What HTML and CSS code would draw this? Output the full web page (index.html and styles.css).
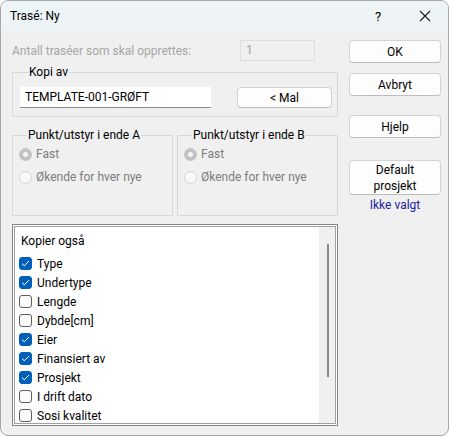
FILE: index.html
```html
<!DOCTYPE html>
<html lang="no">
<head>
<meta charset="utf-8">
<title>Trasé: Ny</title>
<link rel="stylesheet" href="styles.css">
</head>
<body>
<div class="window">
  <div class="titlebar">
    <span class="title">Trasé: Ny</span>
    <span class="help">?</span>
    <span class="close"><svg width="12" height="12" viewBox="0 0 12 12"><path d="M1 1 L11 11 M11 1 L1 11" stroke="#1a1a1a" stroke-width="1.1" fill="none"/></svg></span>
  </div>
  <div class="content">
    <div class="left">
      <div class="count-row">
        <span class="disabled-label">Antall traséer som skal opprettes:</span>
        <div class="input-disabled">1</div>
      </div>
      <fieldset class="group copy-group">
        <legend>Kopi av</legend>
        <div class="copy-row">
          <div class="input">TEMPLATE-001-GRØFT</div>
          <div class="btn small-btn">&lt; Mal</div>
        </div>
      </fieldset>
      <div class="ends">
        <fieldset class="group end-group">
          <legend>Punkt/utstyr i ende A</legend>
          <div class="radio-row"><span class="radio checked"></span><span>Fast</span></div>
          <div class="radio-row"><span class="radio"></span><span>Økende for hver nye</span></div>
        </fieldset>
        <fieldset class="group end-group">
          <legend>Punkt/utstyr i ende B</legend>
          <div class="radio-row"><span class="radio checked"></span><span>Fast</span></div>
          <div class="radio-row"><span class="radio"></span><span>Økende for hver nye</span></div>
        </fieldset>
      </div>
      <div class="listbox">
        <div class="list-inner">
          <div class="list-items">
            <div class="list-header">Kopier også</div>
            <div class="item"><span class="cb on"><svg width="9" height="7" viewBox="0 0 9 7"><path d="M1 3.6 L3.3 5.8 L8 1" stroke="#fff" stroke-width="1" fill="none"/></svg></span>Type</div>
            <div class="item"><span class="cb on"><svg width="9" height="7" viewBox="0 0 9 7"><path d="M1 3.6 L3.3 5.8 L8 1" stroke="#fff" stroke-width="1" fill="none"/></svg></span>Undertype</div>
            <div class="item"><span class="cb"></span>Lengde</div>
            <div class="item"><span class="cb"></span>Dybde[cm]</div>
            <div class="item"><span class="cb on"><svg width="9" height="7" viewBox="0 0 9 7"><path d="M1 3.6 L3.3 5.8 L8 1" stroke="#fff" stroke-width="1" fill="none"/></svg></span>Eier</div>
            <div class="item"><span class="cb on"><svg width="9" height="7" viewBox="0 0 9 7"><path d="M1 3.6 L3.3 5.8 L8 1" stroke="#fff" stroke-width="1" fill="none"/></svg></span>Finansiert av</div>
            <div class="item"><span class="cb on"><svg width="9" height="7" viewBox="0 0 9 7"><path d="M1 3.6 L3.3 5.8 L8 1" stroke="#fff" stroke-width="1" fill="none"/></svg></span>Prosjekt</div>
            <div class="item"><span class="cb"></span>I drift dato</div>
            <div class="item"><span class="cb"></span>Sosi kvalitet</div>
          </div>
          <div class="scrollbar"><div class="thumb"></div></div>
        </div>
      </div>
    </div>
    <div class="right">
      <div class="btn side-btn">OK</div>
      <div class="btn side-btn">Avbryt</div>
      <div class="btn side-btn help-btn">Hjelp</div>
      <div class="btn side-btn default-btn">Default<br>prosjekt</div>
      <div class="link">Ikke valgt</div>
    </div>
  </div>
</div>
</body>
</html>
```
FILE: styles.css
```css
html, body {
  margin: 0;
  padding: 0;
  background: #ffffff;
}
body {
  font-family: Roboto, "Noto Sans", sans-serif;
  font-size: 12px;
  color: #000;
}
.window {
  box-sizing: border-box;
  width: 449px;
  height: 436px;
  border: 1px solid #a8a8a8;
  border-radius: 8px;
  overflow: hidden;
  background: #f0f0f0;
  display: flex;
  flex-direction: column;
}
.titlebar {
  height: 30px;
  flex: none;
  background: #ecf4f6;
  display: flex;
  align-items: center;
}
.title {
  margin-left: 9px;
  flex: 1;
}
.help {
  width: 12px;
  text-align: center;
  font-size: 13px;
  margin-right: 35px;
}
.close {
  display: flex;
  margin-right: 17px;
}
.content {
  display: grid;
  grid-template-columns: 326px 92px;
  column-gap: 11px;
  padding: 9px 0 0 11px;
}
.left {
  display: flex;
  flex-direction: column;
}
.count-row {
  display: flex;
  align-items: center;
  height: 21px;
}
.disabled-label {
  color: #a6a6a6;
  width: 228px;
}
.input-disabled {
  box-sizing: border-box;
  width: 75px;
  height: 21px;
  border: 1px solid #dedede;
  color: #a0a0a0;
  padding: 2px 0 0 5px;
}
.group {
  margin: 0;
  border: 1px solid #d8d8d8;
  border-radius: 1px;
  min-width: 0;
}
.group legend {
  padding: 0 1px;
  margin-left: 8px;
  line-height: 16px;
}
.copy-group {
  margin-top: 3px;
  padding: 7px 5px 8px 7px;
}
.copy-row {
  display: flex;
  justify-content: space-between;
  align-items: center;
}
.input {
  box-sizing: border-box;
  width: 191px;
  height: 21px;
  background: #fff;
  border-bottom: 1px solid #8a8a8a;
  padding: 3px 0 0 5px;
}
.btn {
  box-sizing: border-box;
  background: #fdfdfd;
  border: 1px solid #d3d3d3;
  border-bottom-color: #bdbdbd;
  border-radius: 4px;
  display: flex;
  align-items: center;
  justify-content: center;
  text-align: center;
}
.small-btn {
  width: 95px;
  height: 21px;
}
.ends {
  display: flex;
  gap: 4px;
  margin-top: 10px;
}
.end-group {
  box-sizing: border-box;
  width: 161px;
  height: 89px;
  padding: 1px 0 0 6px;
}
.radio-row {
  display: flex;
  align-items: center;
  height: 20px;
  margin-bottom: 3px;
  color: #7d7d7d;
}
.radio {
  box-sizing: border-box;
  width: 13px;
  height: 13px;
  border-radius: 50%;
  margin-right: 4px;
  border: 1px solid #d2d2d2;
  background: #f8f8f8;
}
.radio.checked {
  border: none;
  background: radial-gradient(circle, #f4f4f4 0 2.2px, #c3c3c3 2.8px);
}
.listbox {
  margin-top: 8px;
  box-sizing: border-box;
  height: 202px;
  border: 1px solid #82868e;
  background: #fff;
  padding: 1px;
}
.list-inner {
  box-sizing: border-box;
  height: 100%;
  border: 1px solid #a0a0a0;
  display: flex;
}
.list-items {
  flex: 1;
  padding: 5px 0 0 4px;
}
.list-header {
  height: 19px;
  line-height: 19px;
  padding-left: 2px;
  margin-bottom: 3px;
}
.item {
  display: flex;
  align-items: center;
  height: 19px;
}
.cb {
  box-sizing: border-box;
  width: 13px;
  height: 13px;
  border-radius: 3px;
  border: 1px solid #5f5f5f;
  background: #fbfbfb;
  margin-right: 5px;
  display: flex;
  align-items: center;
  justify-content: center;
}
.cb.on {
  background: #005fb8;
  border-color: #005fb8;
}
.scrollbar {
  width: 16px;
  background: #f0f0f0;
  display: flex;
  justify-content: center;
  padding-top: 17px;
}
.thumb {
  width: 2px;
  height: 133px;
  background: #8a8a8a;
  margin-left: 1px;
}
.right {
  display: flex;
  flex-direction: column;
}
.side-btn {
  width: 92px;
  height: 23px;
}
.side-btn + .side-btn {
  margin-top: 10px;
}
.side-btn.help-btn {
  margin-top: 19px;
}
.side-btn.default-btn {
  margin-top: 22px;
  height: 35px;
  line-height: 16px;
}
.link {
  color: #1e1ea0;
  text-align: center;
  margin-top: 2px;
  line-height: 16px;
}
```
